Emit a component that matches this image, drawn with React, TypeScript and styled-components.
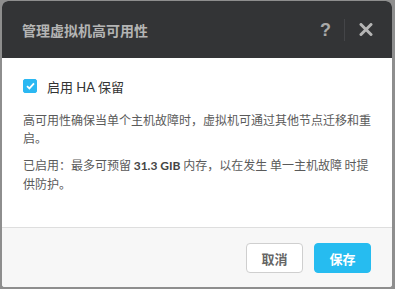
import React, { useState } from 'react';
import styled, { createGlobalStyle } from 'styled-components';

const GlobalStyle = createGlobalStyle`
  html, body {
    margin: 0;
    padding: 0;
    background: #8e8e8e;
    font-family: "Noto Sans CJK SC", sans-serif;
  }
`;

const Page = styled.div`
  display: flex;
  padding: 1px 0 0 2px;
`;

const Modal = styled.div`
  width: 390px;
  background: #fff;
  border-radius: 6px 6px 3px 3px;
  overflow: hidden;
`;

const Header = styled.div`
  display: flex;
  align-items: center;
  height: 57px;
  padding: 0 19px 0 20px;
  background: #333436;
`;

const Title = styled.h3`
  margin: 0;
  font-size: 14px;
  font-weight: bold;
  color: #b4b4b4;
`;

const HeaderActions = styled.div`
  display: flex;
  align-items: center;
  margin-left: auto;
`;

const HelpButton = styled.span`
  font-family: "Liberation Sans", sans-serif;
  font-size: 18px;
  font-weight: bold;
  color: #a9a9a9;
  line-height: 1;
`;

const Divider = styled.div`
  width: 1px;
  height: 22px;
  margin: 0 14px 0 13px;
  background: #444548;
`;

const Body = styled.div`
  padding: 16px 14px 34px 21px;
`;

const CheckRow = styled.label`
  display: flex;
  align-items: center;
  gap: 10px;
  height: 18px;
  margin-top: 3px;
  font-family: "Lato", "Noto Sans CJK SC", sans-serif;
  font-size: 13px;
  color: #333;
`;

const CheckBox = styled.span<{ $checked: boolean }>`
  display: flex;
  align-items: center;
  justify-content: center;
  width: 12px;
  height: 12px;
  border-radius: 2px;
  background: ${(p) => (p.$checked ? '#2bb8f2' : '#fff')};
  border: 1px solid ${(p) => (p.$checked ? '#2bb8f2' : '#ccc')};
`;

const Text = styled.p`
  margin: 9px 0 0;
  font-size: 12px;
  line-height: 18px;
  color: #5a5a5a;

  &:first-of-type {
    margin-top: 16px;
  }

  b {
    font-family: "Lato", sans-serif;
    font-weight: bold;
    color: #444;
  }
`;

const Footer = styled.div`
  display: flex;
  justify-content: flex-end;
  gap: 11px;
  padding: 15px 21px 14px;
  background: #f7f7f7;
  border-top: 1px solid #dedede;
`;

const Button = styled.button<{ $primary?: boolean }>`
  width: 57px;
  height: 30px;
  border-radius: 4px;
  font-family: "Noto Sans CJK SC", sans-serif;
  font-size: 13px;
  font-weight: bold;
  cursor: pointer;
  color: ${(p) => (p.$primary ? '#fff' : '#666')};
  background: ${(p) => (p.$primary ? '#26bcf0' : '#fff')};
  border: 1px solid ${(p) => (p.$primary ? '#26bcf0' : '#cfcfcf')};
`;

const App: React.FC = () => {
  const [enabled, setEnabled] = useState(true);

  return (
    <Page>
      <GlobalStyle />
      <Modal>
        <Header>
          <Title>管理虚拟机高可用性</Title>
          <HeaderActions>
            <HelpButton>?</HelpButton>
            <Divider />
            <svg width="14" height="13" viewBox="0 0 14 13">
              <path d="M2 1.5 L12 11.5 M12 1.5 L2 11.5" stroke="#b5b5b5" strokeWidth="3" strokeLinecap="round" />
            </svg>
          </HeaderActions>
        </Header>

        <Body>
          <CheckRow onClick={() => setEnabled(!enabled)}>
            <CheckBox $checked={enabled}>
              {enabled && (
                <svg width="9" height="8" viewBox="0 0 9 8">
                  <path d="M1 4.2 L3.4 6.4 L8 1.4" stroke="#fff" strokeWidth="1.8" fill="none" />
                </svg>
              )}
            </CheckBox>
            启用 HA 保留
          </CheckRow>
          <Text>高可用性确保当单个主机故障时，虚拟机可通过其他节点迁移和重启。</Text>
          <Text>
            已启用：最多可预留 <b>31.3 GIB</b> 内存，以在发生 单一主机故障 时提供防护。
          </Text>
        </Body>

        <Footer>
          <Button>取消</Button>
          <Button $primary>保存</Button>
        </Footer>
      </Modal>
    </Page>
  );
};

export default App;
